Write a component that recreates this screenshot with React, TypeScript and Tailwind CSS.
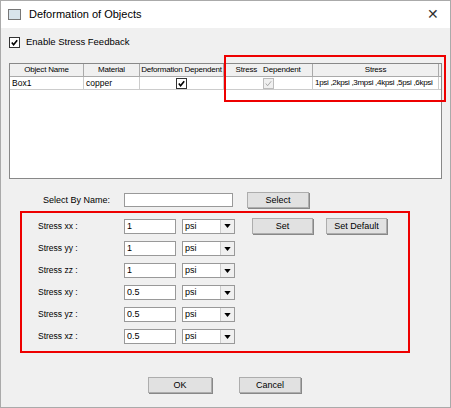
const F = { fontFamily: '"Liberation Sans", Arial, sans-serif' };

function Check({ dim }: { dim?: boolean }) {
  return (
    <span className={`inline-flex h-[11px] w-[11px] items-center justify-center border ${dim ? "border-[#bcbcbc] bg-[#f0f0f0]" : "border-[#333] bg-white"}`}>
      <svg viewBox="0 0 10 10" className="h-[9px] w-[9px]">
        <path d="M2 5 L4 7.5 L8 2.5" fill="none" stroke={dim ? "#a0a0a0" : "#000"} strokeWidth={dim ? 1 : 1.8} />
      </svg>
    </span>
  );
}

function Btn({ label, w }: { label: string; w: string }) {
  return (
    <div className={`${w} flex h-[16px] items-center justify-center border border-[#adadad] bg-[#e1e1e1] text-[9px] text-black shadow-[1px_1px_0_#888]`}>
      {label}
    </div>
  );
}

function Unit() {
  return (
    <div className="flex h-[15px] w-[53px] items-center justify-between border border-[#999] bg-white pl-[2px] text-[9px]">
      <span>psi</span>
      <span className="flex h-[13px] w-[14px] items-center justify-center border-l border-[#ccc] bg-[#f0f0f0]">
        <svg viewBox="0 0 8 5" className="h-[4px] w-[7px]"><path d="M0 0 H8 L4 5Z" fill="#000" /></svg>
      </span>
    </div>
  );
}

const rows: [string, string][] = [
  ["xx", "1"], ["yy", "1"], ["zz", "1"], ["xy", "0.5"], ["yz", "0.5"], ["xz", "0.5"],
];

export default function App() {
  return (
    <div style={F} className="relative h-[408px] w-[451px] overflow-hidden border border-[#aaa] bg-[#f0f0f0] text-black">
      <div className="flex h-[27px] items-center bg-white px-[7px] text-[11px]">
        <span className="mr-[8px] h-[11px] w-[13px] border border-[#777] bg-[#d8e4ec]" />
        <span>Deformation of Objects</span>
        <span className="ml-auto mr-[4px] text-[14px] font-light text-[#333]">✕</span>
      </div>
      <div className="mt-[7px] flex items-center gap-[6px] pl-[8px] text-[9.5px]">
        <Check /> Enable Stress Feedback
      </div>
      <div className="ml-[8px] mt-[14px] h-[116px] w-[433px] overflow-hidden whitespace-nowrap border border-[#888] bg-white text-[8.5px]">
        <div className="flex h-[13px] border-b border-[#aaa] bg-[#f0f0f0]">
          {[["Object Name", "w-[74px]"], ["Material", "w-[56px]"], ["Deformation Dependent", "w-[84px]"], ["Stress   Dependent", "w-[89px]"], ["Stress", "w-[126px]"]].map(([t, w]) => (
            <div key={t} className={`${w} flex items-center justify-center overflow-hidden whitespace-pre border-r border-[#aaa] text-[8px] tracking-[-0.2px]`}>{t}</div>
          ))}
        </div>
        <div className="flex h-[13px] border-b border-[#ccc]">
          <div className="w-[74px] border-r border-[#ccc] pl-[2px]">Box1</div>
          <div className="w-[56px] border-r border-[#ccc] pl-[2px]">copper</div>
          <div className="flex w-[84px] items-center justify-center border-r border-[#ccc]"><Check /></div>
          <div className="flex w-[89px] items-center justify-center border-r border-[#ccc]"><Check dim /></div>
          <div className="w-[126px] overflow-hidden border-r border-[#ccc] pl-[2px] text-[8px] tracking-[-0.3px]">1psi ,2kpsi ,3mpsi ,4kpsi ,5psi ,6kpsi</div>
        </div>
      </div>
      <div className="pointer-events-none absolute left-[223px] top-[54px] h-[47px] w-[222px] border-2 border-[#ee0000]" />
      <div className="mt-[13px] flex items-center text-[9px]">
        <span className="w-[123px] pl-[42px]">Select By Name:</span>
        <div className="h-[14px] w-[109px] border border-[#999] bg-white" />
        <div className="ml-[14px]"><Btn label="Select" w="w-[62px]" /></div>
      </div>
      <div className="ml-[19px] mt-[3px] h-[142px] w-[390px] border-2 border-[#ee0000] pt-[5px] text-[8.5px]">
        {rows.map(([k, v], i) => (
          <div key={k} className={`flex items-center ${i === 0 ? "" : "mt-[7px]"}`}>
            <span className="w-[102px] pl-[16px]">Stress {k} :</span>
            <div className="h-[15px] w-[52px] border border-[#999] bg-white pl-[2px] text-[9px]">{v}</div>
            <div className="ml-[6px]"><Unit /></div>
            {i === 0 && (
              <div className="ml-[17px] flex gap-[13px]">
                <Btn label="Set" w="w-[61px]" />
                <Btn label="Set Default" w="w-[61px]" />
              </div>
            )}
          </div>
        ))}
      </div>
      <div className="mt-[24px] flex gap-[27px] pl-[147px]">
        <Btn label="OK" w="w-[64px]" />
        <Btn label="Cancel" w="w-[62px]" />
      </div>
    </div>
  );
}
